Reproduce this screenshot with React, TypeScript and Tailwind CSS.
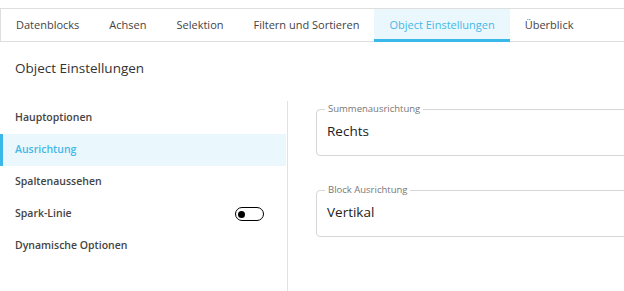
import React, { useState } from 'react';

const tabs = ['Datenblocks', 'Achsen', 'Selektion', 'Filtern und Sortieren', 'Object Einstellungen', 'Überblick'];

const navItems = [
    { label: 'Hauptoptionen' },
    { label: 'Ausrichtung', active: true },
    { label: 'Spaltenaussehen' },
    { label: 'Spark-Linie', toggle: true },
    { label: 'Dynamische Optionen' },
];

const Field: React.FC<{ label: string, value: string }> = ({ label, value }) => (
    <fieldset className="border border-[#d6d6d6] rounded-[4px] pl-[10px] pr-3 pt-0 pb-[14px] w-[400px] min-w-[400px]">
        <legend className="text-[9.5px] text-[#777] px-[3px] ml-[-2px] leading-[12px]">{label}</legend>
        <div className="text-[13.5px] text-[#222] leading-[20px] mt-[6px]">{value}</div>
    </fieldset>
);

const App: React.FC = () => {
    const [activeTab] = useState('Object Einstellungen');
    const [spark, setSpark] = useState(false);

    return (
        <div className="w-[624px] h-[291px] bg-white overflow-hidden text-[#444]" style={{ fontFamily: '"Open Sans", sans-serif' }}>
            <div className="h-[8px]" />
            {/* Tabs */}
            <div className="flex border-t border-l border-b border-[#dedede] h-[34px]">
                {tabs.map(tab => (
                    <div
                        key={tab}
                        className={
                            tab === activeTab
                                ? 'px-[15px] shrink-0 whitespace-nowrap flex items-center text-[11px] text-[#45b8e8] bg-[#eaf7fd] border-b-[3px] border-[#3bb8ea] pt-[3px] -mb-px'
                                : 'px-[15px] shrink-0 whitespace-nowrap flex items-center text-[11px] text-[#444]'
                        }
                    >
                        {tab}
                    </div>
                ))}
            </div>

            <div className="px-[15px] pt-[16px] pb-[10px] text-[13.5px] text-[#333] leading-[20px]">Object Einstellungen</div>

            <div className="flex mt-[13px]">
                {/* Sidebar */}
                <div className="w-[288px] shrink-0 border-r border-[#e2e2e2] h-[191px] pr-[1px] pt-[1px]">
                    {navItems.map(item => (
                        <div
                            key={item.label}
                            className={
                                item.active
                                    ? 'h-[32px] flex items-center justify-between pl-[12px] pr-[22px] text-[10.5px] font-semibold text-[#45b8e8] bg-[#eaf7fd] border-l-[3px] border-[#3bb8ea]'
                                    : 'h-[32px] flex items-center justify-between px-[15px] pr-[22px] text-[10.5px] font-semibold text-[#444]'
                            }
                        >
                            <span>{item.label}</span>
                            {item.toggle && (
                                <button
                                    onClick={() => setSpark(!spark)}
                                    className="w-[29px] h-[14px] rounded-full border-[1.5px] border-black flex items-center px-[2px]"
                                >
                                    <span className="w-[7px] h-[7px] rounded-full bg-black block" />
                                </button>
                            )}
                        </div>
                    ))}
                </div>

                {/* Content */}
                <div className="flex-1 pl-[28px] flex flex-col gap-[28px] pt-[2px]">
                    <Field label="Summenausrichtung" value="Rechts" />
                    <Field label="Block Ausrichtung" value="Vertikal" />
                </div>
            </div>
        </div>
    );
};

export default App;
